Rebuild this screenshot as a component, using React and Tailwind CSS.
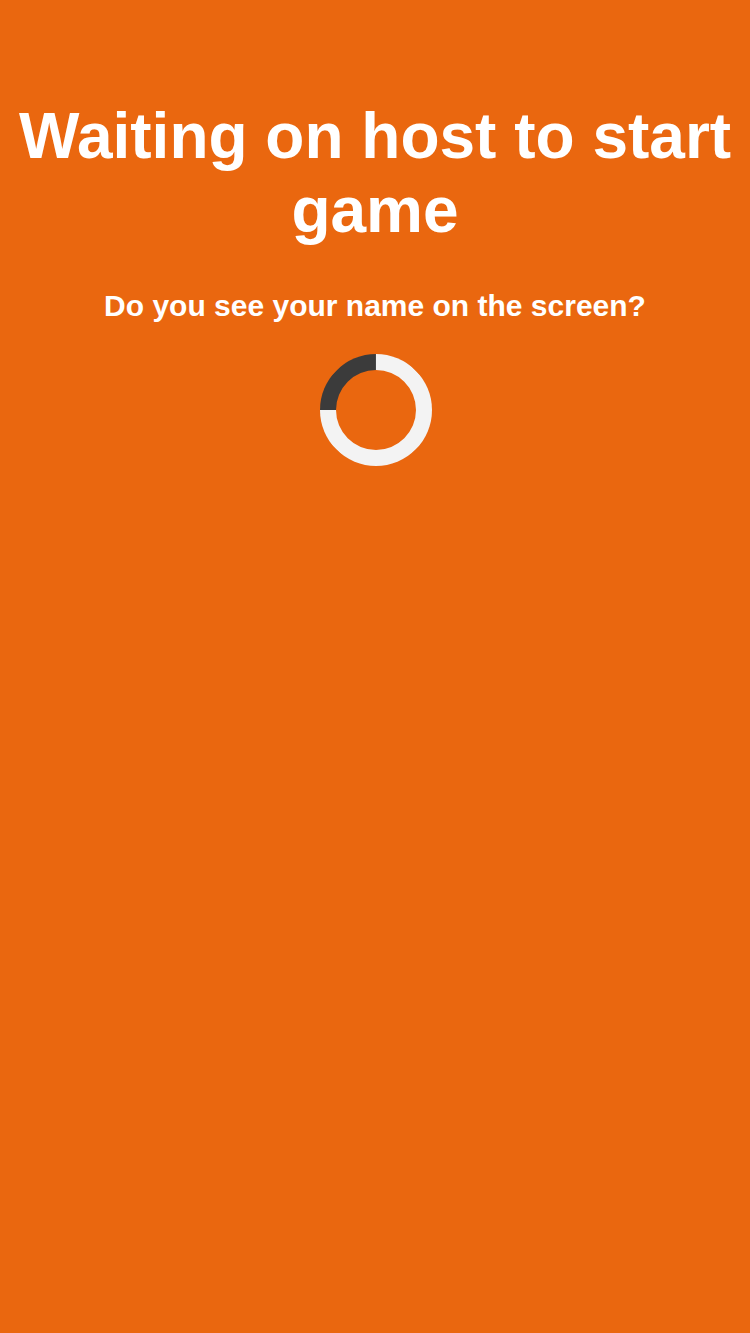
export default function App() {
  return (
    <div
      className="min-h-[1333px] w-full bg-[#ea670f] text-white text-center flex flex-col items-center pt-[100px] px-2"
      style={{ fontFamily: '"Liberation Sans", Arial, sans-serif' }}
    >
      <h1 className="text-[64px] leading-[1.149] font-bold">
        Waiting on host to start game
      </h1>
      <h2 className="mt-[42px] text-[30px] leading-[1.149] font-bold">
        Do you see your name on the screen?
      </h2>
      <div className="mt-[30px] ml-[2px] w-[112px] h-[112px] rounded-full border-[16px] border-[#f3f3f3] border-t-[#3b3b3b] -rotate-45" />
    </div>
  );
}
